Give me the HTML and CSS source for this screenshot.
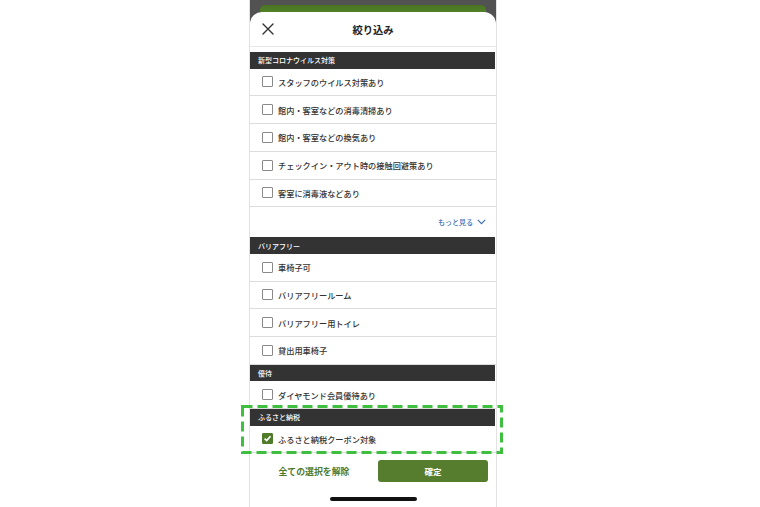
FILE: index.html
```html
<!DOCTYPE html>
<html lang="ja">
<head>
<meta charset="utf-8">
<link rel="stylesheet" href="styles.css">
</head>
<body>
<div class="phone">
  <div class="backdrop"><div class="bar"></div></div>
  <div class="sheet">
    <div class="header">
      <span class="close">
        <svg width="12" height="12" viewBox="0 0 12 12"><path d="M1 1L11 11M11 1L1 11" stroke="#333" stroke-width="1.4" fill="none" stroke-linecap="round"/></svg>
      </span>
      <span class="title">絞り込み</span>
      <span></span>
    </div>
    <div class="section">新型コロナウイルス対策</div>
    <div class="row"><span class="box"></span>スタッフのウイルス対策あり</div>
    <div class="row"><span class="box"></span>館内・客室などの消毒清掃あり</div>
    <div class="row"><span class="box"></span>館内・客室などの換気あり</div>
    <div class="row"><span class="box"></span>チェックイン・アウト時の接触回避策あり</div>
    <div class="row"><span class="box"></span>客室に消毒液などあり</div>
    <div class="more">もっと見る
      <svg width="9" height="6" viewBox="0 0 9 6"><path d="M0.8 0.8L4.5 4.6L8.2 0.8" stroke="#3d6fb5" stroke-width="1.2" fill="none"/></svg>
    </div>
    <div class="section">バリアフリー</div>
    <div class="row"><span class="box"></span>車椅子可</div>
    <div class="row"><span class="box"></span>バリアフリールーム</div>
    <div class="row"><span class="box"></span>バリアフリー用トイレ</div>
    <div class="row"><span class="box"></span>貸出用車椅子</div>
    <div class="section">優待</div>
    <div class="row"><span class="box"></span>ダイヤモンド会員優待あり</div>
    <div class="section">ふるさと納税</div>
    <div class="row"><span class="box checked"><svg width="9" height="9" viewBox="0 0 9 9"><path d="M1.6 4.6L3.7 6.6L7.5 2.2" stroke="#fff" stroke-width="1.7" fill="none"/></svg></span>ふるさと納税クーポン対象</div>
    <div class="footer">
      <span class="clear">全ての選択を解除</span>
      <span class="confirm">確定</span>
    </div>
    <div class="indicator"></div>
  </div>
  <svg class="highlight" width="262" height="49" viewBox="0 0 262 49">
    <rect x="1.5" y="1.5" width="259" height="46" fill="none" stroke="#3fbf3f" stroke-width="3" stroke-dasharray="10 5"/>
  </svg>
</div>
</body>
</html>
```
FILE: styles.css
```css
* { box-sizing: border-box; }
html, body { margin: 0; padding: 0; background: #fff; }
body {
  font-family: "Noto Sans CJK JP", "Noto Sans", sans-serif;
  color: #333;
}
.phone {
  position: relative;
  margin-left: 249px;
  width: 248px;
  height: 507px;
  background: #525252;
  border-left: 1px solid #e2e2e2;
  border-right: 1px solid #e2e2e2;
  display: flex;
  flex-direction: column;
}
.backdrop {
  height: 12px;
  overflow: hidden;
  padding: 5px 10px 0 10px;
}
.bar {
  height: 20px;
  border-radius: 5px 5px 0 0;
  background: linear-gradient(#4a7324, #5f9a2c);
}
.sheet {
  flex: 1;
  background: #fff;
  border-radius: 12px 12px 0 0;
  display: flex;
  flex-direction: column;
}
.header {
  height: 35px;
  flex: none;
  display: grid;
  grid-template-columns: 1fr auto 1fr;
  align-items: center;
  border-bottom: 1px solid #e8e8e8;
  margin-bottom: 5px;
}
.close {
  padding-left: 12px;
  display: flex;
  align-items: center;
}
.title {
  font-size: 10.3px;
  font-weight: 700;
  color: #222;
}
.section {
  height: 16.5px;
  flex: none;
  background: #333;
  color: #fff;
  font-size: 7px;
  font-weight: 500;
  padding-left: 8px;
  display: flex;
  align-items: center;
  margin-right: 1px;
}
.row {
  height: 27.75px;
  flex: none;
  border-bottom: 1px solid #dcdcdc;
  display: flex;
  align-items: center;
  padding-left: 12px;
  font-size: 8.2px;
  font-weight: 500;
  color: #333;
}
.box {
  width: 11px;
  height: 11px;
  border: 1px solid #8a8a8a;
  border-radius: 1px;
  margin-right: 5px;
  display: flex;
  align-items: center;
  justify-content: center;
  flex: none;
}
.box.checked {
  background: #4f7b2b;
  border-color: #4f7b2b;
}
.more {
  height: 30px;
  flex: none;
  display: flex;
  align-items: center;
  justify-content: flex-end;
  gap: 4px;
  padding-right: 10px;
  font-size: 7px;
  font-weight: 500;
  color: #3d6fb5;
}
.footer {
  display: grid;
  grid-template-columns: 1fr 110px;
  align-items: center;
  padding: 7px 8px 0 0;
}
.clear {
  text-align: center;
  font-size: 8.9px;
  font-weight: 700;
  color: #4f7a2c;
}
.confirm {
  height: 22px;
  border-radius: 3px;
  background: #567d2e;
  color: #fff;
  font-size: 8.5px;
  font-weight: 700;
  display: flex;
  align-items: center;
  justify-content: center;
}
.indicator {
  width: 87px;
  height: 4px;
  border-radius: 2px;
  background: #111;
  margin: 15px auto 0;
}
.highlight {
  position: absolute;
  left: -9px;
  top: 405px;
}
```
